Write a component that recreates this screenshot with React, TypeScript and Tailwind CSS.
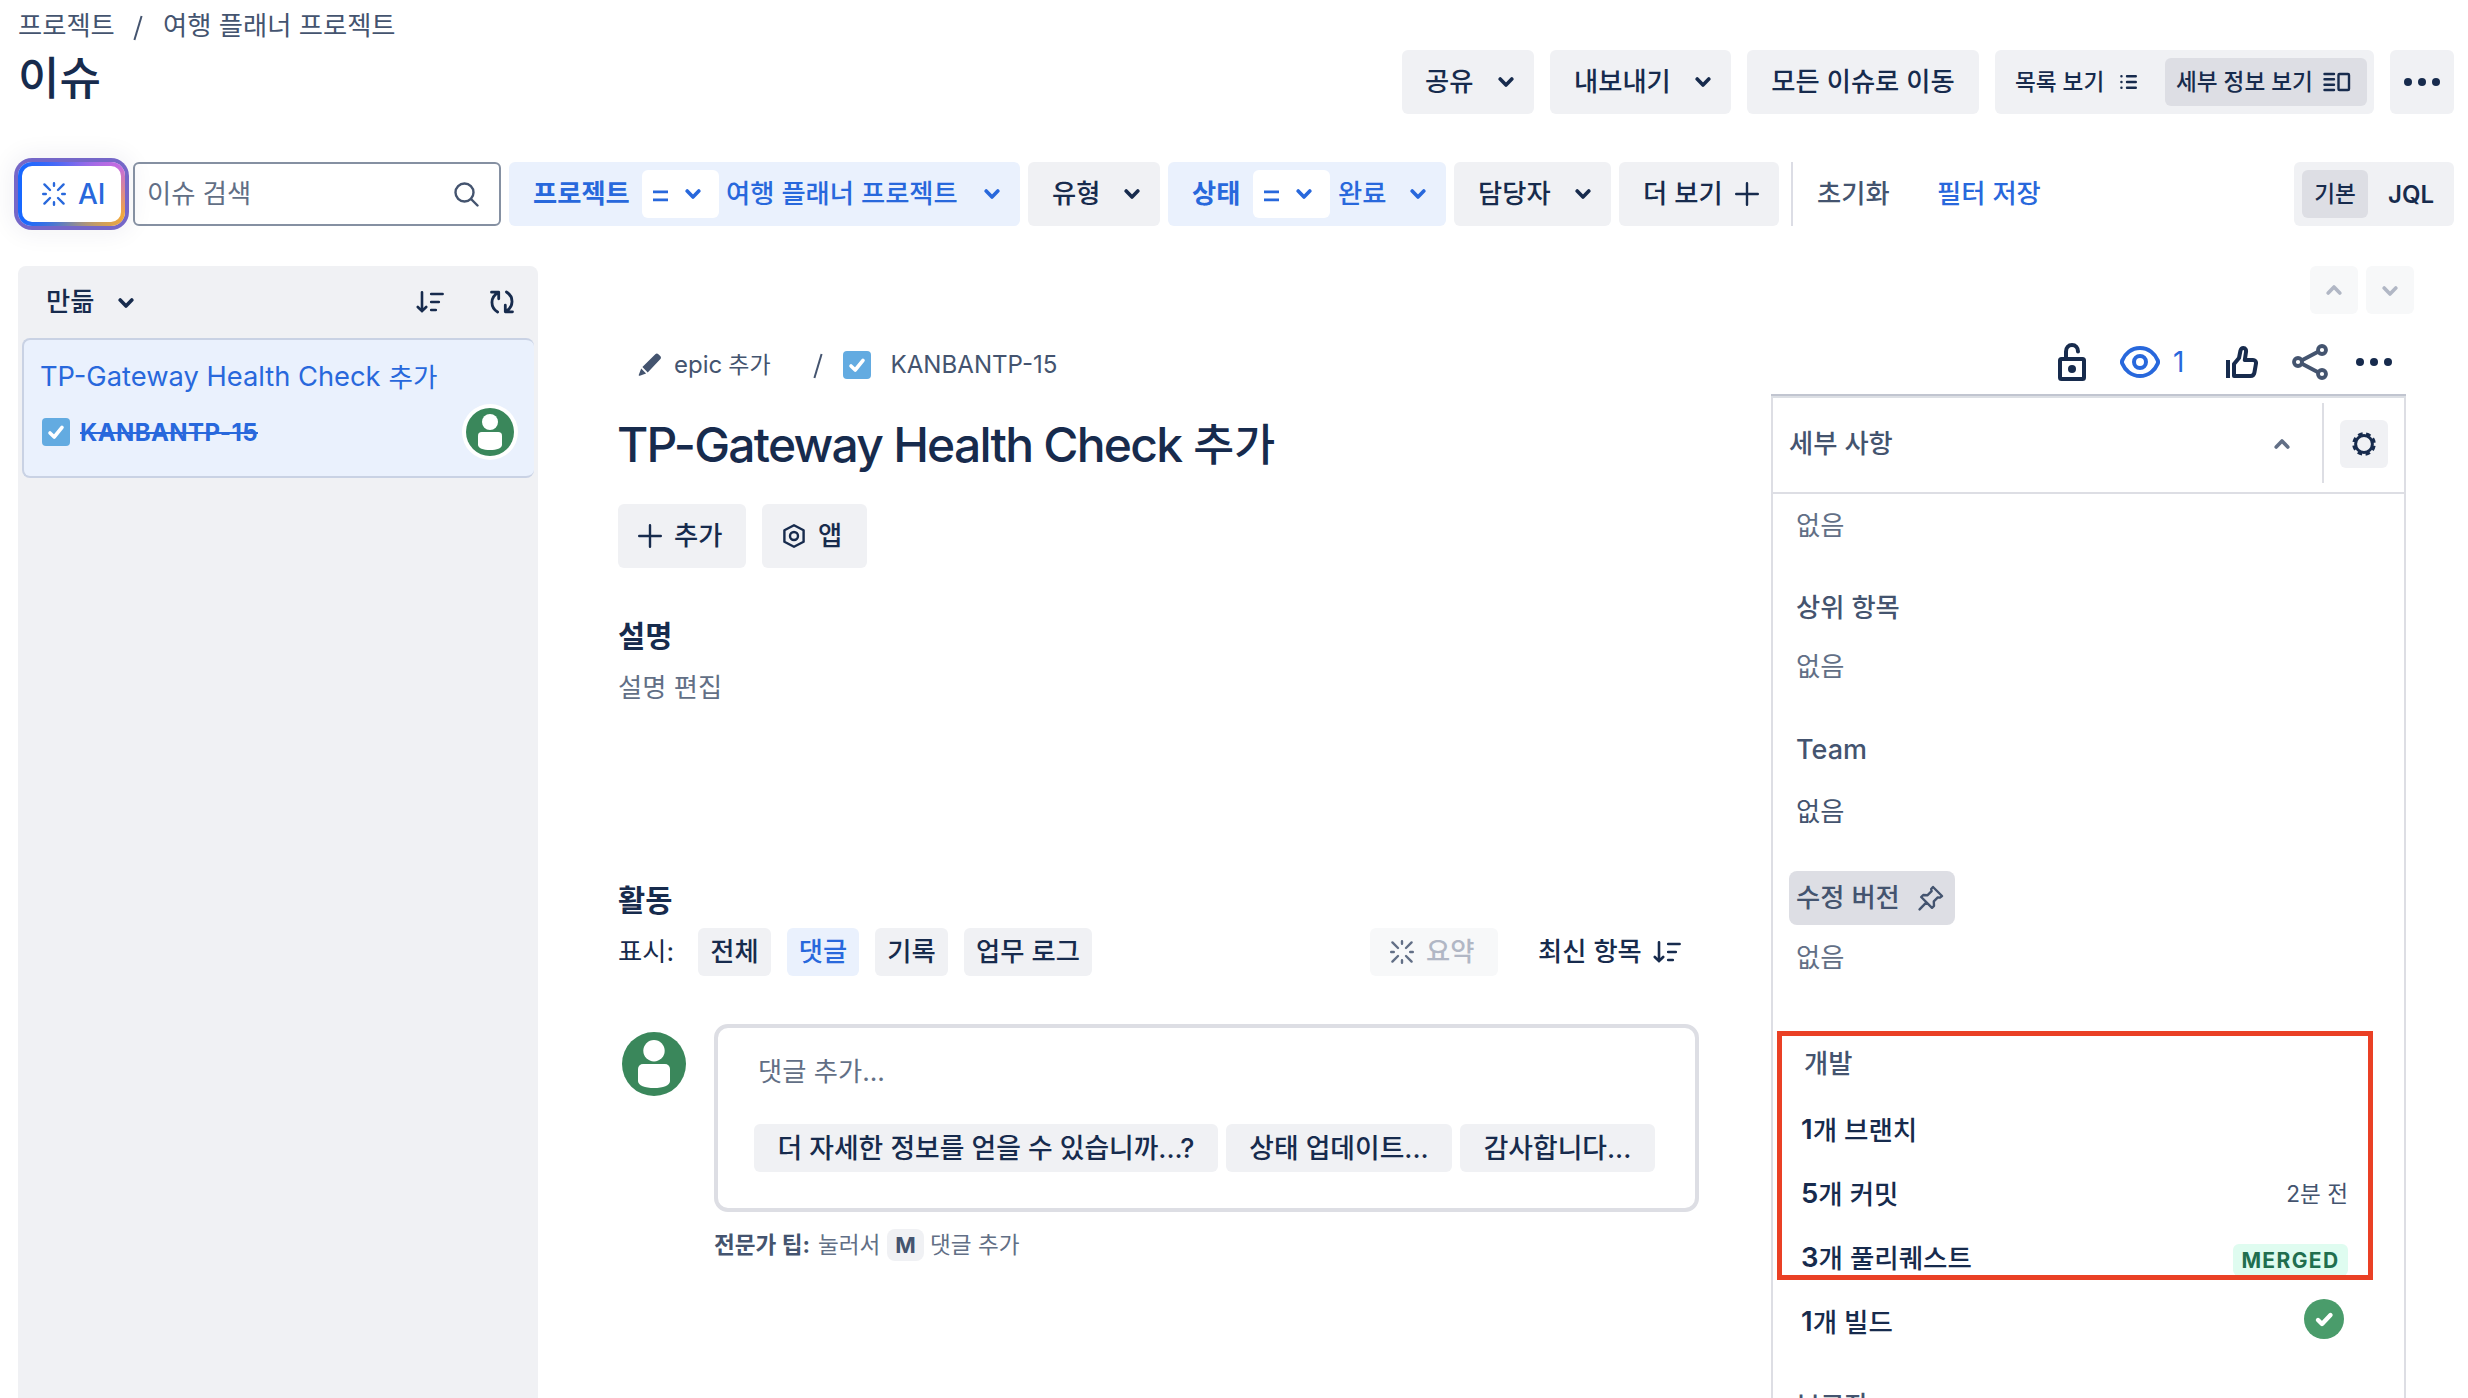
import React from "react";

type Dir = "up" | "down";

function Chevron({ dir = "down", className = "" }: { dir?: Dir; className?: string }) {
  return (
    <svg width="16" height="12" viewBox="0 0 16 12" fill="none" stroke="currentColor" strokeWidth="3.6" strokeLinecap="round" strokeLinejoin="round" className={`shrink-0 ${className}`}>
      <path d={dir === "down" ? "M2.2 3l5.8 6 5.8-6" : "M2.2 9L8 3l5.8 6"} />
    </svg>
  );
}

function Spark({ className = "" }: { className?: string }) {
  return (
    <svg width="24" height="24" viewBox="0 0 24 24" fill="none" stroke="currentColor" strokeWidth="2.4" strokeLinecap="round" className={`shrink-0 ${className}`}>
      <path d="M12 1.2v2.6M12 20.2v2.6M1.2 12h2.6M20.2 12h2.6M2.4 2.4l5.6 5.6M16 16l5.6 5.6M2.4 21.6L8 16M16 8l5.6-5.6" />
    </svg>
  );
}

function SortIcon({ className = "" }: { className?: string }) {
  return (
    <svg width="28" height="24" viewBox="0 0 28 24" fill="none" stroke="currentColor" strokeWidth="2.6" strokeLinecap="round" strokeLinejoin="round" className={`shrink-0 ${className}`}>
      <path d="M6 2.2v19M1.8 17L6 21.2l4.2-4.2M15.2 4h11.4M15.2 12h7.6M15.2 20h4.6" />
    </svg>
  );
}

function Plus({ className = "" }: { className?: string }) {
  return (
    <svg width="24" height="24" viewBox="0 0 24 24" fill="none" stroke="currentColor" strokeWidth="2.4" strokeLinecap="round" className={`shrink-0 ${className}`}>
      <path d="M12 1.2v21.6M1.2 12h21.6" />
    </svg>
  );
}

function Dots({ className = "" }: { className?: string }) {
  return (
    <svg width="36" height="8" viewBox="0 0 36 8" fill="currentColor" className={`shrink-0 ${className}`}>
      <circle cx="4" cy="4" r="4" />
      <circle cx="18" cy="4" r="4" />
      <circle cx="32" cy="4" r="4" />
    </svg>
  );
}

function TaskIcon({ className = "" }: { className?: string }) {
  return (
    <svg width="28" height="28" viewBox="0 0 28 28" fill="none" className={`shrink-0 ${className}`}>
      <rect width="28" height="28" rx="4" fill="#63ABE1" />
      <path d="M8 15l4.2 4L20 9.3" stroke="#fff" strokeWidth="3.6" strokeLinecap="round" strokeLinejoin="round" />
    </svg>
  );
}

function Avatar({ className = "" }: { className?: string }) {
  return (
    <svg viewBox="0 0 64 64" className={`shrink-0 ${className}`}>
      <circle cx="32" cy="32" r="32" fill="#3A875B" />
      <circle cx="32" cy="18.7" r="10.7" fill="#fff" />
      <path d="M16 37a5 5 0 015-5h22a5 5 0 015 5v12c0 4.600-7 7-16 7s-16-2.400-16-7z" fill="#fff" />
    </svg>
  );
}

function Operator() {
  return (
    <span className="flex h-12 w-[77px] shrink-0 items-center rounded-md bg-white pl-[11px]">
      <svg width="15" height="12" viewBox="0 0 15 12" fill="currentColor" className="mt-1">
        <path d="M0 0.600h15v2.600H0zM0 8.600h15v2.600H0z" />
      </svg>
      <Chevron className="ml-[17px]" />
    </span>
  );
}

function Label({ children, className = "" }: { children: React.ReactNode; className?: string }) {
  return <span className={`pt-px ${className}`}>{children}</span>;
}

const btn = "flex h-16 shrink-0 items-center rounded-md bg-[#F0F1F4] font-medium";

function TopBar() {
  return (
    <header className="flex h-[114px] justify-between">
      <div className="pl-[18px] pt-2.5">
        <nav className="flex h-8 items-center text-[#44546F]">
          <span className="w-[95px]">프로젝트</span>
          <svg width="10" height="26" viewBox="0 0 10 26" stroke="currentColor" strokeWidth="2" className="ml-5 mt-1">
            <path d="M8.600 1L1.400 25" />
          </svg>
          <span className="ml-5">여행 플래너 프로젝트</span>
        </nav>
        <h1 className="mt-[11px] h-[52px] text-[45px] font-medium leading-[52px]">이슈</h1>
      </div>
      <div className="mr-[14px] mt-[50px] flex gap-4">
        <button className={`${btn} w-[132px] justify-between pl-[23px] pr-5`}><Label>공유</Label><Chevron /></button>
        <button className={`${btn} w-[181px] justify-between pl-6 pr-5`}><Label>내보내기</Label><Chevron /></button>
        <button className={`${btn} w-[232px] justify-center`}><Label>모든 이슈로 이동</Label></button>
        <div className={`${btn} w-[379px] pl-5 text-[22.600px]`}>
          <Label className="w-[105px]">목록 보기</Label>
          <svg width="17" height="16" viewBox="0 0 17 16" stroke="currentColor" strokeWidth="2.400" strokeLinecap="round">
            <path d="M1.400 2.200h.1M1.400 8h.1M1.400 13.800h.1M7 2.200h8.800M7 8h8.800M7 13.800h8.800" />
          </svg>
          <span className="ml-[28px] flex h-12 w-[202px] items-center rounded-md bg-[#DDDEE4] pl-[11px]">
            <Label className="w-[147px]">세부 정보 보기</Label>
            <svg width="28" height="20" viewBox="0 0 28 20" fill="none" stroke="currentColor" strokeWidth="2.400" strokeLinecap="round">
              <path d="M1.500 2h9.500M1.500 7.300h9.500M1.500 12.700h9.500M1.500 18h9.500" />
              <rect x="15.500" y="2" width="10.500" height="16" rx="1" />
            </svg>
          </span>
        </div>
        <button className={`${btn} w-16 justify-center`}><Dots /></button>
      </div>
    </header>
  );
}

function Filters() {
  const active = "flex h-16 shrink-0 items-center rounded-md bg-[#EAF1FD] pl-6 text-[#2868DC]";
  return (
    <div className="mt-12 flex h-16 items-center pl-[18px] pr-[14px]">
      <div className="flex h-16 w-[107px] shrink-0 rounded-[14px] bg-[conic-gradient(from_60deg,#C56BE0_0%,#F2A93B_15%,#1868FF_50%,#1868FF_66%,#C56BE0_100%)] p-1 shadow-[0_0_0_4px_#7567C8,0_0_24px_8px_rgba(30,31,80,0.06)]">
        <button className="flex h-14 w-full items-center rounded-[10px] bg-white pl-5 text-[28px] font-medium text-[#2868DC]"><Spark className="mr-3" />AI</button>
      </div>
      <div className="ml-2 flex h-16 w-[368px] shrink-0 items-center justify-between rounded-md border-2 border-[#8590A2] pl-[12px] pr-5 text-[#626F86]">
        <Label>이슈 검색</Label>
        <svg width="25" height="25" viewBox="0 0 25 25" fill="none" stroke="#44546F" strokeWidth="2.400" strokeLinecap="round"><circle cx="10.500" cy="10.500" r="9" /><path d="M17 17l6.500 6.500" /></svg>
      </div>
      <div className={`${active} ml-2 w-[511px]`}>
        <Label className="w-[109px] font-bold">프로젝트</Label>
        <Operator />
        <Label className="ml-[7px] w-[258px] font-medium">여행 플래너 프로젝트</Label>
        <Chevron />
      </div>
      <button className={`${btn} ml-2 w-[132px] justify-between pl-6 pr-5`}><Label>유형</Label><Chevron /></button>
      <div className={`${active} ml-2 w-[278px]`}>
        <Label className="w-[61px] font-bold">상태</Label>
        <Operator />
        <Label className="ml-2 w-[72px] font-medium">완료</Label>
        <Chevron />
      </div>
      <button className={`${btn} ml-2 w-[157px] justify-between pl-6 pr-5`}><Label>담당자</Label><Chevron /></button>
      <button className={`${btn} ml-2 w-[160px] justify-between pl-6 pr-5`}><Label>더 보기</Label><Plus /></button>
      <span className="ml-3 h-16 w-0.5 bg-[#DCDDE5]" />
      <Label className="ml-6 w-[120px] font-medium text-[#44546F]">초기화</Label>
      <Label className="font-medium text-[#2868DC]">필터 저장</Label>
      <div className={`${btn} ml-auto w-40 pl-2 text-[22.600px]`}>
        <span className="flex h-12 w-[66px] items-center justify-center rounded-md bg-[#DDDEE4]"><Label>기본</Label></span>
        <Label className="ml-5 text-[24px] font-semibold">JQL</Label>
      </div>
    </div>
  );
}

function IssueList() {
  return (
    <aside className="ml-[18px] h-full w-[520px] shrink-0 rounded-t-lg bg-[#F0F1F4] px-1">
      <div className="flex h-[72px] items-center pl-6 pr-[19px] font-medium">
        <Label>만듦</Label>
        <Chevron className="ml-6 mt-0.5" />
        <SortIcon className="ml-auto" />
        <svg width="26" height="24" viewBox="0 0 26 24" fill="none" stroke="currentColor" strokeWidth="2.800" strokeLinecap="round" strokeLinejoin="round" className="ml-[45px]">
          <path d="M2.500 2.200h7.200v6.600M9.200 2.800C1 7 1 17.500 8.600 22M23.500 21.800h-7.200v-6.600M16.800 21.200C25 17 25 6.500 17.400 2" />
        </svg>
      </div>
      <div className="h-[140px] rounded-lg border-y-2 border-l-2 border-[#C9D2E4] bg-[#EAF1FD] pl-4 text-[#2868DC]">
        <div className="mt-[21px] flex h-8 items-center gap-2">
          <span className="text-[27.300px]">TP-Gateway Health Check</span><span className="text-[26.600px]">추가</span>
        </div>
        <div className="mt-[11px] flex h-14 items-center">
          <TaskIcon className="ml-0.5" />
          <span className="ml-2.5 mt-0.5 text-[24px] font-bold tracking-[0.400px] line-through">KANBANTP-15</span>
          <span className="ml-auto mr-4 rounded-full bg-white p-1"><Avatar className="size-12" /></span>
        </div>
      </div>
    </aside>
  );
}

function IssueBody() {
  const chip = "flex h-12 items-center justify-center rounded-md bg-[#F0F1F4] font-medium";
  return (
    <main className="ml-20 w-[1081px] shrink-0">
      <div className="mt-[83px] flex h-8 items-center pl-[20px] text-[#44546F]">
        <svg width="24" height="24" viewBox="0 0 24 24" fill="currentColor"><path d="M17.300 1.300a2.200 2.200 0 013.100 0l1.800 1.800a2.200 2.200 0 010 3.100L9.700 19.500l-5.300-5.500zM3.200 15.600l4.900 5-6.300 2.200c-.8.2-1.200-.2-1-1z" /></svg>
        <span className="ml-3 text-[24px]">epic</span>
        <span className="ml-1.5 text-[23px]">추가</span>
        <svg width="10" height="26" viewBox="0 0 10 26" stroke="currentColor" strokeWidth="2" className="ml-[42px] mt-0.5"><path d="M8.600 1L1.400 25" /></svg>
        <TaskIcon className="ml-5" />
        <span className="ml-5 text-[24.100px]">KANBANTP-15</span>
      </div>
      <h2 className="-ml-px mt-9 flex h-14 items-center gap-3 font-medium"><span className="text-[48px] tracking-[-1.770px]">TP-Gateway Health Check</span><span className="text-[44.500px]">추가</span></h2>
      <div className="mt-[31px] flex gap-4">
        <button className={`${btn} w-32 pl-5`}><Plus className="mr-3" /><Label>추가</Label></button>
        <button className={`${btn} w-[105px] pl-5`}>
          <svg width="24" height="24" viewBox="0 0 24 24" fill="none" stroke="currentColor" strokeWidth="2.400" strokeLinejoin="round" className="mr-3"><path d="M12 1.300l9.600 5v11.400l-9.600 5-9.600-5V6.300z" /><circle cx="12" cy="12" r="4" /></svg>
          <Label>앱</Label>
        </button>
      </div>
      <h3 className="mt-11 h-12 text-[29.500px] font-bold leading-[48px]">설명</h3>
      <p className="mt-2.5 h-9 leading-9 text-[#626F86]">설명 편집</p>
      <h3 className="mt-[170px] h-12 text-[29.500px] font-bold leading-[48px]">활동</h3>
      <div className="mt-1 flex h-12 items-center">
        <span className="w-20">표시:</span>
        <span className={`${chip} w-[73px]`}>전체</span>
        <span className="ml-4 flex h-12 w-[72px] items-center justify-center rounded-md bg-[#EAF1FD] font-medium text-[#2868DC]">댓글</span>
        <span className={`${chip} ml-4 w-[73px]`}>기록</span>
        <span className={`${chip} ml-4 w-32`}>업무 로그</span>
        <span className="ml-[278px] flex h-12 w-32 items-center rounded-md bg-[#F7F8F9] pl-5 font-medium text-[#B1B7C5]"><Spark className="mr-3 text-[#626F86]" />요약</span>
        <span className="ml-10 w-[115px] font-medium">최신 항목</span>
        <SortIcon />
      </div>
      <div className="mt-12 flex">
        <Avatar className="ml-1 mt-2 size-16" />
        <div className="ml-7 w-[985px]">
          <div className="h-[188px] rounded-[14px] border-4 border-[#DDDEE4] px-9 pt-6">
            <p className="h-10 pl-1 leading-10 text-[#626F86]">댓글 추가...</p>
            <div className="mt-8 flex gap-2 text-[26.800px]">
              <span className={`${chip} w-[464px]`}>더 자세한 정보를 얻을 수 있습니까...?</span>
              <span className={`${chip} w-[226px]`}>상태 업데이트...</span>
              <span className={`${chip} w-[195px]`}>감사합니다...</span>
            </div>
          </div>
          <div className="mt-[17px] flex h-8 items-center text-[22.600px] text-[#626F86]">
            <b className="w-[104px] text-[#44546F]">전문가 팁:</b>
            <span className="w-[69px]">눌러서</span>
            <kbd className="flex h-8 w-[37px] items-center justify-center rounded-lg bg-[#F0F1F4] font-[Inter] text-[22px] font-bold text-[#44546F]">M</kbd>
            <span className="ml-1.5">댓글 추가</span>
          </div>
        </div>
      </div>
    </main>
  );
}

function DevRow({ n, label, children }: { n: number; label: string; children?: React.ReactNode }) {
  return (
    <div className="flex h-16 items-center justify-between pl-7 pr-14 font-medium">
      <span className="flex items-center"><b className="text-[27.500px] font-semibold">{n}</b><span className="text-[26.500px]">{label}</span></span>
      {children}
    </div>
  );
}

function Details() {
  return (
    <section className="ml-[72px] flex w-[635px] shrink-0 flex-col">
      <div className="-mr-2 flex shrink-0 justify-end gap-2 text-[#B1B7C5]">
        <span className="flex h-12 w-12 items-center justify-center rounded-md bg-[#F7F8F9]"><Chevron dir="up" /></span>
        <span className="flex h-12 w-12 items-center justify-center rounded-md bg-[#F7F8F9]"><Chevron className="mt-0.5" /></span>
      </div>
      <div className="mr-[14px] mt-7 flex h-10 shrink-0 items-center justify-end">
        <svg width="28" height="38" viewBox="0 0 28 38" fill="none" stroke="currentColor" strokeWidth="4"><rect x="2" y="16" width="24" height="20" rx="1.500" /><path d="M8 16V8.500C8 4.500 10.500 2 14 2s6 2.500 6 6.500" strokeLinecap="round" /><circle cx="14" cy="26" r="4" fill="currentColor" stroke="none" /></svg>
        <svg width="40" height="32" viewBox="0 0 40 32" fill="none" stroke="#2868DC" strokeWidth="4" className="ml-[34px]"><path d="M20 2C11 2 5 8 2.500 14a4 4 0 000 4C5 24 11 30 20 30s15-6 17.500-12a4 4 0 000-4C35 8 29 2 20 2z" /><circle cx="20" cy="16" r="6" /></svg>
        <span className="ml-[13px] w-[15px] text-[28px] text-[#2868DC]">1</span>
        <svg width="32" height="32" viewBox="0 0 32 32" fill="none" stroke="currentColor" strokeWidth="4" strokeLinejoin="round" className="ml-[38px]"><path d="M2 14v18" /><path d="M8 30V18l5-6 1.500-7.500C15 2.800 16 2 17.300 2 19.500 2 20.300 4 20 6l-1.200 8H27c2 0 3.300 1.700 3 3.500l-1.600 9.200A4 4 0 0124.500 30z" /></svg>
        <svg width="36" height="36" viewBox="0 0 36 36" fill="none" stroke="#44546F" strokeWidth="3.800" className="ml-[34px]"><path d="M10 16.300L26.500 7.500M10 19.700l16.500 8.800" /><circle cx="6" cy="18" r="4" /><circle cx="30" cy="6" r="4" /><circle cx="30" cy="30" r="4" /></svg>
        <Dots className="ml-7" />
      </div>
      <div className="mt-3 h-1 shrink-0 border-b-2 border-t-2 border-b-[#DCDFE4] border-t-[#C1C5D0]" />
      <div className="flex-1 border-x-2 border-[#DDDEE4]">
        <div className="flex h-24 items-center border-b-2 border-[#DDDEE4] pb-0.5 pl-4 pr-4 font-medium text-[#44546F]">
          세부 사항
          <Chevron dir="up" className="ml-auto text-[#626F86]" />
          <span className="ml-8 mt-[-2px] h-20 w-0.5 bg-[#DDDEE4]" />
          <span className="ml-4 flex size-12 items-center justify-center rounded-md bg-[#F0F1F4] text-[#172B4D]">
            <svg width="24" height="24" viewBox="0 0 24 24" fill="none" stroke="currentColor"><circle cx="12" cy="12" r="8.400" strokeWidth="3" /><circle cx="12" cy="12" r="10.300" strokeWidth="3" strokeDasharray="4.600 3.490" strokeDashoffset="-1.800" /></svg>
          </span>
        </div>
        <div className="pl-[23px] text-[#626F86]">
          <p className="mt-3 h-10 leading-10">없음</p>
          <p className="mt-[42px] h-10 font-medium leading-10 text-[#44546F]">상위 항목</p>
          <p className="mt-[19px] h-10 leading-10">없음</p>
          <p className="mt-[43px] h-10 text-[27px] font-medium leading-10 text-[#44546F]">Team</p>
          <p className="mt-[22px] h-10 leading-10 text-[#44546F]">없음</p>
          <div className="-ml-[7px] mt-[39px] flex h-[54px] w-[166px] items-center rounded-lg bg-[#DDDEE4] pl-[7px] font-medium text-[#44546F]">
            <span className="w-[122px]">수정 버전</span>
            <svg width="26" height="26" viewBox="0 0 26 26" fill="none" stroke="currentColor" strokeWidth="2.400" strokeLinejoin="round" strokeLinecap="round"><path d="M15 2l9 9-2 1.600-2.200-.2-4 4 .2 4.400L14 22.800 3.200 12l2-2 4.400.2 4-4-.4-2.200zM8.400 17.400L1.600 24.400" /></svg>
          </div>
          <p className="mt-[13px] h-10 leading-10">없음</p>
        </div>
        <div className="relative mt-[66px]">
          <div className="pointer-events-none absolute -top-[13px] left-1 z-10 h-[249px] w-[596px] border-[5px] border-[#EA4025]" />
          <p className="h-10 pl-[31px] font-medium leading-10 text-[#44546F]">개발</p>
          <div className="mt-[14px]">
            <DevRow n={1} label="개 브랜치" />
            <DevRow n={5} label="개 커밋"><span className="text-[22.600px] font-normal text-[#44546F]">2분 전</span></DevRow>
            <DevRow n={3} label="개 풀리퀘스트"><span className="mt-1 flex h-8 w-[115px] items-center justify-center rounded-md bg-[#DFFCF0] text-[21px] font-bold tracking-[1.400px] text-[#216E4E]">MERGED</span></DevRow>
            <DevRow n={1} label="개 빌드">
              <svg width="40" height="40" viewBox="0 0 40 40" fill="none" className="-mt-1.5 mr-1"><circle cx="20" cy="20" r="20" fill="#4A9C6B" /><path d="M14 21l4 4 8.500-9" stroke="#fff" strokeWidth="4.400" strokeLinecap="round" strokeLinejoin="round" /></svg>
            </DevRow>
          </div>
          <p className="mt-[32px] h-10 pl-[23px] font-medium leading-10 text-[#44546F]">보고자</p>
        </div>
      </div>
    </section>
  );
}

export default function App() {
  return (
    <div className="h-[1398px] w-[2468px] overflow-hidden whitespace-nowrap bg-white font-['Inter','Noto_Sans_CJK_KR',sans-serif] text-[26.300px] leading-none text-[#172B4D]">
      <TopBar />
      <Filters />
      <div className="mt-10 flex h-[1132px] overflow-hidden">
        <IssueList />
        <IssueBody />
        <Details />
      </div>
    </div>
  );
}
